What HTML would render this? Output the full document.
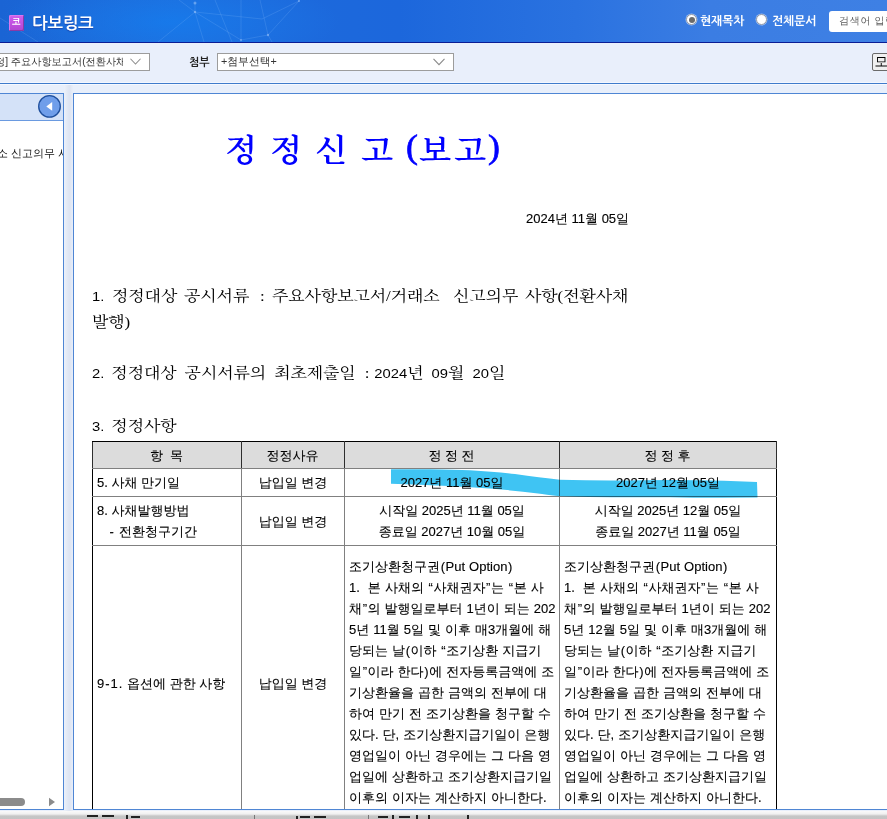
<!DOCTYPE html>
<html lang="ko">
<head>
<meta charset="utf-8">
<title>다보링크</title>
<style>
html,body{margin:0;padding:0;}
body{width:887px;height:819px;overflow:hidden;position:relative;background:#e8effb;font-family:"Liberation Sans","WenQuanYi Zen Hei","NanumGothic",sans-serif;color:#000;}
.abs{position:absolute;}
#hdr{left:0;top:0;width:887px;height:42px;background:linear-gradient(90deg,#1a64d4 0%,#1c6cdc 20%,#1c67dc 45%,#2a72e0 65%,#3b7de3 80%,#3e80e4 100%);border-bottom:1.5px solid #0a1c94;overflow:hidden;}
#net{left:0;top:0;}
#logo{left:8.5px;top:14.6px;width:15px;height:16px;background:linear-gradient(180deg,#d060ec 0%,#c04fe0 55%,#b046d0 100%);border-radius:1.5px;box-shadow:inset -1px -1px 0 #8a3aa6, inset 1px 1px 0 #d878f0;color:#fff;font-family:"Liberation Sans","NanumGothic",sans-serif;font-size:9px;font-weight:bold;line-height:14px;text-align:center;text-indent:.5px;}
#brand{left:32.3px;top:11.4px;color:#fff;font-family:"Liberation Sans","NanumGothic",sans-serif;font-weight:bold;font-size:16.5px;line-height:24px;white-space:nowrap;letter-spacing:-.3px;text-shadow:0 1px 1px rgba(20,40,140,.55);}
.radio{width:9px;height:9px;border-radius:50%;background:#fff;border:1px solid #8f98a8;box-shadow:0 0 0 .5px rgba(255,255,255,.5);}
.radio.on::after{content:"";position:absolute;left:1.5px;top:1.5px;width:6px;height:6px;border-radius:50%;background:#6b6b6b;}
.rl{color:#fff;font-family:"Liberation Sans","NanumGothic",sans-serif;font-weight:bold;font-size:11.8px;line-height:14px;margin-top:1px;white-space:nowrap;}
#search{left:829px;top:11px;width:70px;height:21px;background:#fff;border-radius:3px;}
#search span{position:absolute;left:10px;top:3px;font-size:10px;line-height:14px;color:#5a5a5a;white-space:nowrap;letter-spacing:.7px;}
#tb{left:0;top:43px;width:887px;height:40px;background:#e9effb;border-bottom:1px solid #3f7bcb;box-shadow:0 1px 0 #f6f9ff, inset 0 -1px 0 #f3f7ff;}
.sel{background:#fff;border:1px solid #9c9c9c;height:16px;font-size:10.2px;line-height:17px;color:#333;white-space:nowrap;overflow:hidden;}
.chev{position:absolute;top:4px;}
#lp{left:-1px;top:93px;width:63px;height:715px;background:#fff;border:1px solid #4f86d4;overflow:hidden;}
#lph{left:0;top:0;width:63px;height:26px;background:#d4e2f8;border-bottom:1px solid #6a9ae0;}
#gap{left:64px;top:85px;width:9px;height:726px;background:linear-gradient(90deg,#ecf1fa 0%,#e0e7f4 45%,#dde4f2 65%,#e8eef9 100%);}
#rp{left:73px;top:93px;width:820px;height:715px;background:#fff;border:1px solid #4f86d4;overflow:hidden;}
#bot{left:0;top:811px;width:887px;height:8px;background:linear-gradient(180deg,#fafafa 0,#f0f0f0 3px,#dcdcdc 4px,#c6c6c6 5px,#c4c4c4 8px);overflow:hidden;}
#bot i{position:absolute;background:#222;display:block;}
#doc{left:0;top:0;width:813px;height:715px;}
#title{left:151px;top:34.6px;width:300px;height:44px;font-family:"Liberation Serif","Noto Serif CJK SC",serif;font-weight:600;font-size:32px;line-height:44px;color:#0000ff;white-space:nowrap;word-spacing:5px;}
#date{left:452px;top:117px;font-size:13px;line-height:16px;white-space:nowrap;-webkit-text-stroke:.12px #000;}
.para{font-family:"Liberation Serif","Noto Serif CJK SC",serif;font-size:17px;line-height:26px;white-space:nowrap;color:#000;letter-spacing:-.12px;word-spacing:3.9px;transform:scaleY(.9);transform-origin:0 50%;margin-top:1px;}
.para .w{position:absolute;top:0;}
.para .n{font-family:"Liberation Sans",sans-serif;font-size:14.8px;letter-spacing:0;}
#tbl{left:18px;top:347px;border-collapse:collapse;table-layout:fixed;width:684px;font-size:13px;line-height:21px;-webkit-text-stroke:.12px #000;}
#tbl td{border:1px solid #808080;padding:0 5px 0 4px;vertical-align:middle;word-break:break-all;}
#tbl tr.h td{background:#dcdcdc;text-align:center;border-top-color:#000;border-left-color:#2e2e2e;border-right-color:#2e2e2e;}
#tbl td:first-child{border-left-color:#000;}
#tbl td:last-child{border-right-color:#000;}
#tbl tr td.m{padding-top:3px;}
#tbl td.c{text-align:center;padding:0 4px;}
#tbl .q{display:inline-block;width:5.6px;text-align:center;}
#tbl td.t{word-spacing:.4px;white-space:nowrap;}
#title span{position:absolute;top:0;display:block;transform:scale(1.04,.95);transform-origin:0 50%;}
#hl{left:0;top:0;mix-blend-mode:multiply;}
</style>
</head>
<body>
<div id="hdr" class="abs">
  <svg id="net" class="abs" width="887" height="42" viewBox="0 0 887 42">
    <defs><radialGradient id="glow" cx="0.5" cy="0.5" r="0.5"><stop offset="0" stop-color="#1384f6" stop-opacity=".55"/><stop offset="1" stop-color="#1f86f2" stop-opacity="0"/></radialGradient></defs>
    <ellipse cx="170" cy="22" rx="170" ry="46" fill="url(#glow)"/>
    <g stroke="#9fcaff" stroke-opacity=".25" stroke-width=".7" fill="none">
      <path d="M195 12 L158 42 M195 12 L204 42 M195 12 L179 0 M195 12 L241 40 M195 12 L262 19 L299 1 M195 3 L195 12 M241 0 L241 42 M260 0 L268 35 L272 42 M268 35 L299 1 M268 35 L241 40 M0 18 L38 42 M215 0 L232 42"/>
    </g>
    <g fill="#b8d8ff" fill-opacity=".45"><circle cx="195" cy="12" r="1.2"/><circle cx="195" cy="3" r="1.5"/><circle cx="268" cy="35" r="1.2"/><circle cx="299" cy="1" r="1.1"/><circle cx="241" cy="40" r="1"/></g>
  </svg>
  <div id="logo" class="abs">코</div>
  <div id="brand" class="abs">다보링크</div>
  <div class="abs radio on" style="left:686px;top:14px;"></div>
  <div class="abs rl" style="left:700px;top:13px;">현재목차</div>
  <div class="abs radio" style="left:756px;top:14px;"></div>
  <div class="abs rl" style="left:772px;top:13px;">전체문서</div>
  <div id="search" class="abs"><span>검색어 입력</span></div>
</div>
<div id="tb" class="abs">
  <div class="abs sel" style="left:-20px;top:10px;width:168px;"><span style="position:absolute;left:-19.4px;top:-1px;width:161.8px;overflow:hidden;display:block;">[기재정정] 주요사항보고서(전환사채권발행결정)</span>
    <svg class="chev" style="left:148.5px" width="11" height="7.4" viewBox="0 0 12 8"><path d="M0.5 0.8 L6 6.6 L11.5 0.8" fill="none" stroke="#8a8a8a" stroke-width="1.1"/></svg></div>
  <div class="abs" style="left:189px;top:12px;font-family:'Liberation Sans','NanumGothic',sans-serif;font-size:11px;font-weight:bold;line-height:14px;color:#222;">첨부</div>
  <div class="abs sel" style="left:217px;top:10px;width:235px;"><span style="position:absolute;left:3px;top:-1.5px;font-size:10.8px;">+첨부선택+</span>
    <svg class="chev" style="left:215px" width="12" height="8" viewBox="0 0 12 8"><path d="M0.5 0.8 L6 6.6 L11.5 0.8" fill="none" stroke="#8a8a8a" stroke-width="1.1"/></svg></div>
  <div class="abs" style="left:872px;top:10px;width:20px;height:15.5px;border:1px solid #6a6a6a;border-radius:2px;background:#f0f0f0;font-size:13.5px;line-height:16px;color:#000;"><span style="position:absolute;left:1.5px;top:0;">모</span></div>
</div>
<div id="lp" class="abs">
  <div id="lph" class="abs">
    <svg class="abs" style="left:36px;top:-.5px" width="26" height="25" viewBox="0 0 26 25"><circle cx="13.5" cy="12.4" r="10.8" fill="#6f9eea" stroke="#1f4f9c" stroke-width="1.3"/><path d="M10.3 12.4 L16.2 8 L16.2 16.8 Z" fill="#fff"/></svg>
  </div>
  <div class="abs" style="left:-3px;top:52px;font-size:11px;line-height:14px;color:#111;white-space:nowrap;">소 신고의무 사</div>
  <div class="abs" style="left:0;top:701px;width:63px;height:14px;background:#fff;">
    <div class="abs" style="left:-6px;top:2.5px;width:31px;height:8px;border-radius:4px;background:#8b8b8b;"></div>
    <svg class="abs" style="left:48px;top:2px" width="8" height="10" viewBox="0 0 8 10"><path d="M1 0.8 L7 5 L1 9.2 Z" fill="#8b8b8b"/></svg>
  </div>
</div>
<div id="gap" class="abs"></div>
<div id="rp" class="abs">
<div id="doc" class="abs">
  <div id="title" class="abs"><span style="left:0">정</span> <span style="left:45px">정</span> <span style="left:90px">신</span> <span style="left:136px">고</span> <span style="left:180.5px;top:-3.5px;font-size:34.5px;font-weight:400;-webkit-text-stroke:.7px #00f">(</span><span style="left:194px">보</span><span style="left:229px">고</span><span style="left:262.8px;top:-3.5px;font-size:34.5px;font-weight:400;-webkit-text-stroke:.7px #00f">)</span></div>
  <div id="date" class="abs">2024년 11월 05일</div>
  <div class="abs para" style="left:18px;top:189px;width:560px;height:26px;">
    <span class="w n" style="left:0px;">1.</span>
    <span class="w" style="left:20px;">정정대상</span>
    <span class="w" style="left:92px;">공시서류</span>
    <span class="w" style="left:168px;">:</span>
    <span class="w" style="left:180px;">주요사항보고서/거래소</span>
    <span class="w" style="left:361px;">신고의무</span>
    <span class="w" style="left:433px;">사항(전환사채</span>
  </div>
  <div class="abs para" style="left:18px;top:215px;">발행)</div>
  <div class="abs para" style="left:18px;top:266px;"><span class="n" style="margin-right:-1px">2.</span> 정정대상 공시서류의 최초제출일<span style="margin-left:1px"> </span>:<span style="margin-left:-3px"> </span><span class="n">2024</span>년 <span class="n">09</span>월 <span class="n">20</span>일</div>
  <div class="abs para" style="left:18px;top:319px;"><span class="n" style="margin-right:-1px">3.</span> 정정사항</div>
  <table id="tbl" class="abs">
    <colgroup><col style="width:149px"><col style="width:103px"><col style="width:215px"><col style="width:217px"></colgroup>
    <tr class="h" style="height:27px"><td>항&nbsp; 목</td><td>정정사유</td><td>정 정 전</td><td>정 정 후</td></tr>
    <tr style="height:28px"><td>5. 사채 만기일</td><td class="c">납입일 변경</td><td class="c">2027년 11월 05일</td><td class="c">2027년 12월 05일</td></tr>
    <tr style="height:49px"><td>8. 사채발행방법<br><span style="margin-left:1.6px">&nbsp;&nbsp;</span> -<span style="margin-left:1.5px"> </span>전환청구기간</td><td class="c">납입일 변경</td><td class="c">시작일 2025년 11월 05일<br>종료일 2027년 10월 05일</td><td class="c">시작일 2025년 12월 05일<br>종료일 2027년 11월 05일</td></tr>
    <tr style="height:272px"><td class="m"><span style="letter-spacing:1px">9-1.</span> 옵션에 관한 사항</td><td class="c m">납입일 변경</td>
      <td class="t">조기상환청구권<span class="q">(</span>Put Option<span class="q">)</span><br>1.&nbsp; 본 사채의 <span class="q">“</span>사채권자<span class="q">”</span>는 <span class="q">“</span>본 사<br>채<span class="q">”</span>의 발행일로부터 1년이 되는 202<br>5년 11월 5일 및 이후 매3개월에 해<br>당되는 날<span class="q">(</span>이하 <span class="q">“</span>조기상환 지급기<br>일<span class="q">”</span>이라 한다<span class="q">)</span>에 전자등록금액에 조<br>기상환율을 곱한 금액의 전부에 대<br>하여 만기 전 조기상환을 청구할 수<br>있다. 단, 조기상환지급기일이 은행<br>영업일이 아닌 경우에는 그 다음 영<br>업일에 상환하고 조기상환지급기일<br>이후의 이자는 계산하지 아니한다.</td>
      <td class="t">조기상환청구권<span class="q">(</span>Put Option<span class="q">)</span><br>1.&nbsp; 본 사채의 <span class="q">“</span>사채권자<span class="q">”</span>는 <span class="q">“</span>본 사<br>채<span class="q">”</span>의 발행일로부터 1년이 되는 202<br>5년 12월 5일 및 이후 매3개월에 해<br>당되는 날<span class="q">(</span>이하 <span class="q">“</span>조기상환 지급기<br>일<span class="q">”</span>이라 한다<span class="q">)</span>에 전자등록금액에 조<br>기상환율을 곱한 금액의 전부에 대<br>하여 만기 전 조기상환을 청구할 수<br>있다. 단, 조기상환지급기일이 은행<br>영업일이 아닌 경우에는 그 다음 영<br>업일에 상환하고 조기상환지급기일<br>이후의 이자는 계산하지 아니한다.</td></tr>
  </table>
  <svg id="hl" class="abs" width="813" height="715" viewBox="74 94 813 715"><path fill="#3fc4f3" d="M391 469.3 L430 469.2 Q455 469.4 470 470.2 Q495 471.6 515 474 Q540 477.6 560 479.8 Q600 481 640 480.3 Q680 479.6 724 480.8 L757 482 L757.5 497.6 Q700 498 670 497.2 Q600 497.4 560 496.2 Q545 494.6 538 493.4 Q515 490.6 493 488.8 Q470 487 448 486 Q420 484.8 391 483.8 Z"/></svg>
</div>
</div>
<div id="bot" class="abs">
  <i style="left:87px;top:4px;width:11px;height:1.5px"></i><i style="left:102px;top:4px;width:12px;height:1.5px"></i>
  <i style="left:126px;top:4px;width:1.5px;height:4px"></i><i style="left:131px;top:5px;width:9px;height:1.5px"></i>
  <i style="left:254px;top:4px;width:1px;height:4px;background:#777"></i><i style="left:368px;top:4px;width:1px;height:4px;background:#777"></i>
  <i style="left:296px;top:5px;width:1.5px;height:3px"></i><i style="left:300px;top:5px;width:10px;height:1.5px"></i><i style="left:314px;top:5px;width:12px;height:1.5px"></i>
  <i style="left:378px;top:5px;width:10px;height:1.5px"></i><i style="left:392px;top:4px;width:1.5px;height:4px"></i><i style="left:399px;top:5px;width:11px;height:1.5px"></i><i style="left:416px;top:4px;width:1.5px;height:4px"></i><i style="left:428px;top:4px;width:1.5px;height:4px"></i>
  <i style="left:467px;top:4px;width:1.5px;height:4px"></i>
</div>
</body>
</html>
